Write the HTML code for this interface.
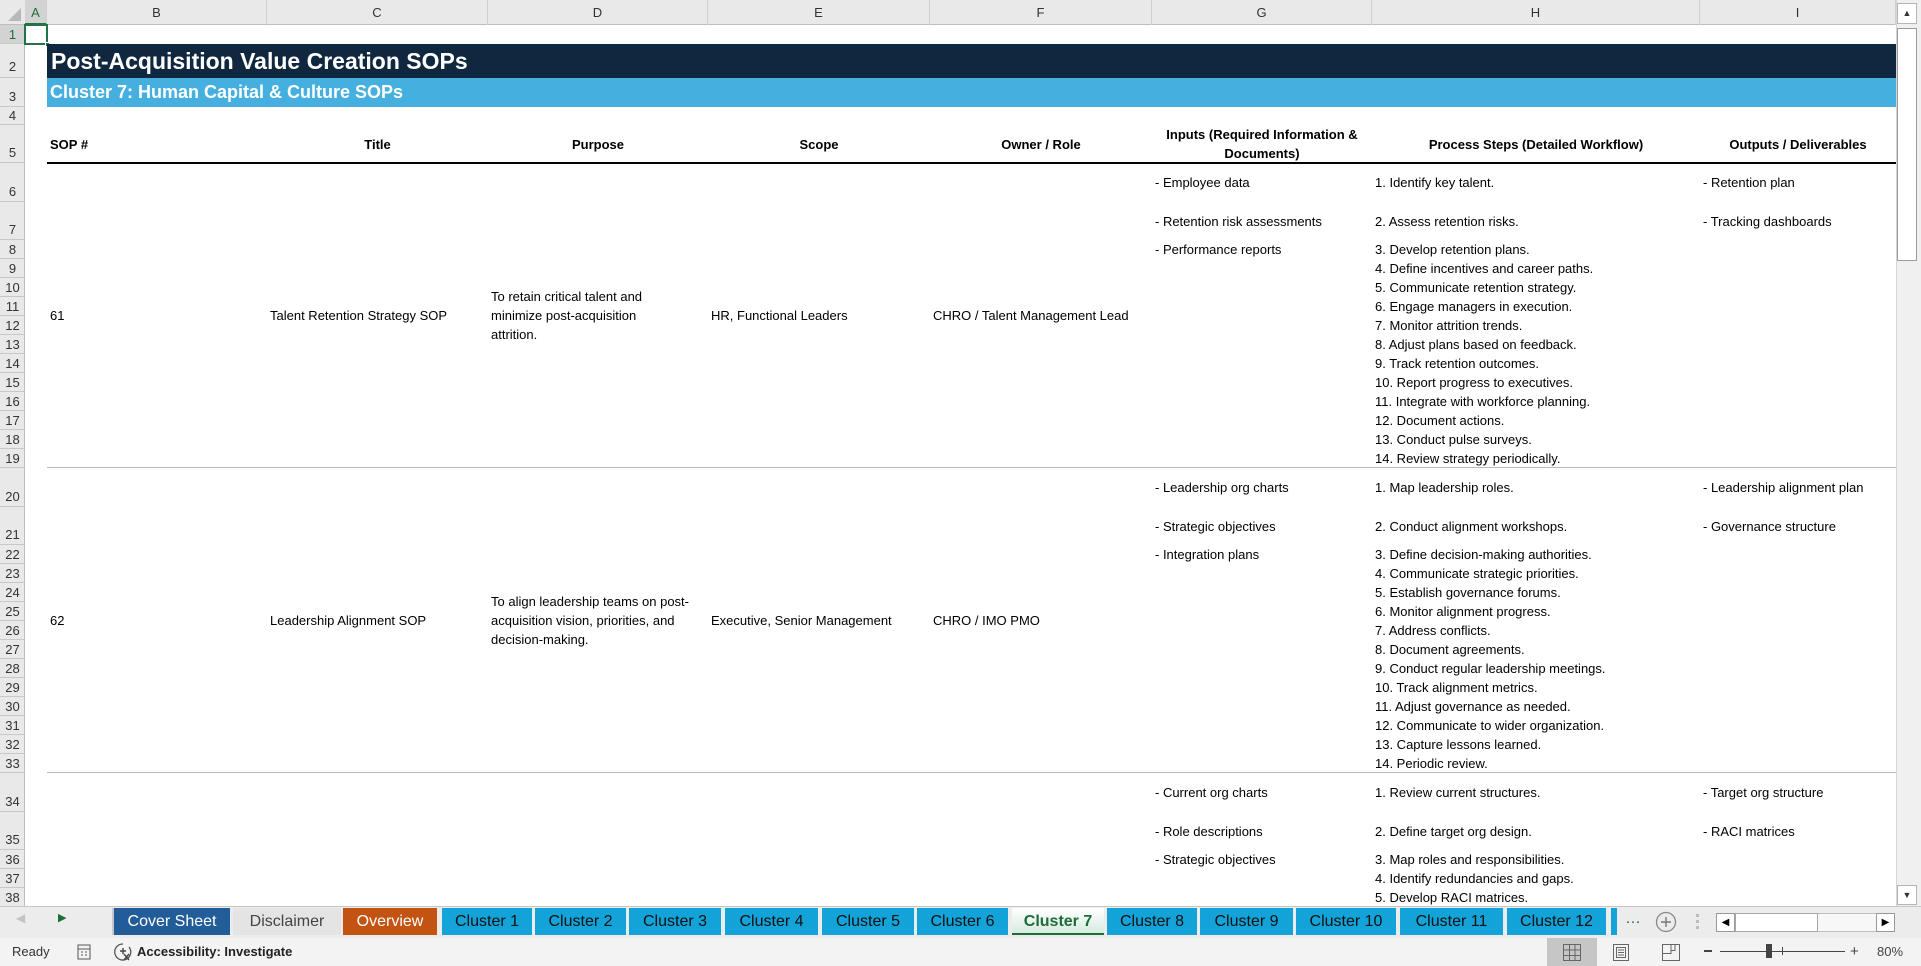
<!DOCTYPE html>
<html><head><meta charset="utf-8"><style>
*{margin:0;padding:0;box-sizing:border-box}
body{width:1921px;height:966px;overflow:hidden;background:#fff;font-family:"Liberation Sans",Arial,sans-serif;position:relative;color:#000}
.a{position:absolute}
.ch{position:absolute;top:0;height:25px;line-height:25px;text-align:center;font-size:13px;color:#333;border-right:1px solid #d0d0d0}
.rh{position:absolute;left:0;width:25px;text-align:center;font-size:13px;color:#333;border-bottom:1px solid #c8c8c8}
.t{position:absolute;font-size:13px;white-space:nowrap;display:flex;align-items:center}
.m{position:absolute;font-size:13px;display:flex;align-items:center;line-height:19px}
.tab{position:absolute;top:908px;height:27px;line-height:27px;text-align:center;font-size:16px;color:#111;background:#14a3d8}
</style></head><body>
<div class="a" style="left:0;top:0;width:1896px;height:25px;background:#e9e9e9;border-bottom:1px solid #bdbdbd"></div>
<svg class="a" style="left:8px;top:8px" width="14" height="14"><polygon points="13,0 13,13 0,13" fill="#b8b8b8"/></svg>
<div class="ch" style="left:25px;width:22px;background:#d3d3d3;color:#1e6b3a;border-bottom:2px solid #217346">A</div>
<div class="ch" style="left:47px;width:220px">B</div>
<div class="ch" style="left:267px;width:221px">C</div>
<div class="ch" style="left:488px;width:220px">D</div>
<div class="ch" style="left:708px;width:222px">E</div>
<div class="ch" style="left:930px;width:222px">F</div>
<div class="ch" style="left:1152px;width:220px">G</div>
<div class="ch" style="left:1372px;width:328px">H</div>
<div class="ch" style="left:1700px;width:196px">I</div>
<div class="a" style="left:0;top:25px;width:25px;height:882px;background:#e9e9e9;border-right:1px solid #bdbdbd"></div>
<div class="rh" style="top:25px;height:19px;line-height:19px;background:#d3d3d3;color:#1e6b3a">1</div>
<div class="rh" style="top:44px;height:34px;line-height:46px">2</div>
<div class="rh" style="top:78px;height:29px;line-height:38px">3</div>
<div class="rh" style="top:107px;height:18px;line-height:18px">4</div>
<div class="rh" style="top:125px;height:38px;line-height:56px">5</div>
<div class="rh" style="top:163px;height:39px;line-height:58px">6</div>
<div class="rh" style="top:202px;height:38px;line-height:56px">7</div>
<div class="rh" style="top:240px;height:19px;line-height:19px">8</div>
<div class="rh" style="top:259px;height:19px;line-height:19px">9</div>
<div class="rh" style="top:278px;height:19px;line-height:19px">10</div>
<div class="rh" style="top:297px;height:19px;line-height:19px">11</div>
<div class="rh" style="top:316px;height:19px;line-height:19px">12</div>
<div class="rh" style="top:335px;height:19px;line-height:19px">13</div>
<div class="rh" style="top:354px;height:19px;line-height:19px">14</div>
<div class="rh" style="top:373px;height:19px;line-height:19px">15</div>
<div class="rh" style="top:392px;height:19px;line-height:19px">16</div>
<div class="rh" style="top:411px;height:19px;line-height:19px">17</div>
<div class="rh" style="top:430px;height:19px;line-height:19px">18</div>
<div class="rh" style="top:449px;height:19px;line-height:19px">19</div>
<div class="rh" style="top:468px;height:39px;line-height:58px">20</div>
<div class="rh" style="top:507px;height:38px;line-height:56px">21</div>
<div class="rh" style="top:545px;height:19px;line-height:19px">22</div>
<div class="rh" style="top:564px;height:19px;line-height:19px">23</div>
<div class="rh" style="top:583px;height:19px;line-height:19px">24</div>
<div class="rh" style="top:602px;height:19px;line-height:19px">25</div>
<div class="rh" style="top:621px;height:19px;line-height:19px">26</div>
<div class="rh" style="top:640px;height:19px;line-height:19px">27</div>
<div class="rh" style="top:659px;height:19px;line-height:19px">28</div>
<div class="rh" style="top:678px;height:19px;line-height:19px">29</div>
<div class="rh" style="top:697px;height:19px;line-height:19px">30</div>
<div class="rh" style="top:716px;height:19px;line-height:19px">31</div>
<div class="rh" style="top:735px;height:19px;line-height:19px">32</div>
<div class="rh" style="top:754px;height:19px;line-height:19px">33</div>
<div class="rh" style="top:773px;height:39px;line-height:58px">34</div>
<div class="rh" style="top:812px;height:38px;line-height:56px">35</div>
<div class="rh" style="top:850px;height:19px;line-height:19px">36</div>
<div class="rh" style="top:869px;height:19px;line-height:19px">37</div>
<div class="rh" style="top:888px;height:19px;line-height:19px">38</div>
<div class="a" style="left:24px;top:24px;width:24px;height:21px;border:2px solid #217346"></div>
<div class="a" style="left:45px;top:42px;width:5px;height:5px;background:#217346;border:1px solid #fff"></div>
<div class="a" style="left:47px;top:44px;width:1849px;height:34px;background:#10283f;color:#fff;font-weight:bold;font-size:23px;line-height:34px;padding-left:4px">Post-Acquisition Value Creation SOPs</div>
<div class="a" style="left:47px;top:78px;width:1849px;height:29px;background:#45b0e0;color:#fff;font-weight:bold;font-size:18px;line-height:29px;padding-left:3px">Cluster 7: Human Capital &amp; Culture SOPs</div>
<div class="a" style="left:47px;top:162px;width:1849px;height:2px;background:#000"></div>
<div class="t" style="left:50px;top:125px;height:38px;font-weight:bold">SOP #</div>
<div class="t" style="left:267px;width:221px;top:125px;height:38px;font-weight:bold;justify-content:center">Title</div>
<div class="t" style="left:488px;width:220px;top:125px;height:38px;font-weight:bold;justify-content:center">Purpose</div>
<div class="t" style="left:708px;width:222px;top:125px;height:38px;font-weight:bold;justify-content:center">Scope</div>
<div class="t" style="left:930px;width:222px;top:125px;height:38px;font-weight:bold;justify-content:center">Owner / Role</div>
<div class="m" style="left:1152px;width:220px;top:125px;height:38px;font-weight:bold;justify-content:center;text-align:center">Inputs (Required Information &amp;<br>Documents)</div>
<div class="t" style="left:1372px;width:328px;top:125px;height:38px;font-weight:bold;justify-content:center">Process Steps (Detailed Workflow)</div>
<div class="t" style="left:1700px;width:196px;top:125px;height:38px;font-weight:bold;justify-content:center">Outputs / Deliverables</div>
<div class="a" style="left:47px;top:467px;width:1849px;height:1px;background:#bcbcbc"></div>
<div class="a" style="left:47px;top:772px;width:1849px;height:1px;background:#bcbcbc"></div>
<div class="t" style="left:50px;top:163px;height:305px">61</div>
<div class="t" style="left:270px;top:163px;height:305px">Talent Retention Strategy SOP</div>
<div class="m" style="left:491px;top:163px;height:305px">To retain critical talent and<br>minimize post-acquisition<br>attrition.</div>
<div class="t" style="left:711px;top:163px;height:305px">HR, Functional Leaders</div>
<div class="t" style="left:933px;top:163px;height:305px">CHRO / Talent Management Lead</div>
<div class="t" style="left:1155px;top:163px;height:39px">- Employee data</div>
<div class="t" style="left:1155px;top:202px;height:38px">- Retention risk assessments</div>
<div class="t" style="left:1155px;top:240px;height:19px">- Performance reports</div>
<div class="t" style="left:1703px;top:163px;height:39px">- Retention plan</div>
<div class="t" style="left:1703px;top:202px;height:38px">- Tracking dashboards</div>
<div class="t" style="left:1375px;top:163px;height:39px">1. Identify key talent.</div>
<div class="t" style="left:1375px;top:202px;height:38px">2. Assess retention risks.</div>
<div class="t" style="left:1375px;top:240px;height:19px">3. Develop retention plans.</div>
<div class="t" style="left:1375px;top:259px;height:19px">4. Define incentives and career paths.</div>
<div class="t" style="left:1375px;top:278px;height:19px">5. Communicate retention strategy.</div>
<div class="t" style="left:1375px;top:297px;height:19px">6. Engage managers in execution.</div>
<div class="t" style="left:1375px;top:316px;height:19px">7. Monitor attrition trends.</div>
<div class="t" style="left:1375px;top:335px;height:19px">8. Adjust plans based on feedback.</div>
<div class="t" style="left:1375px;top:354px;height:19px">9. Track retention outcomes.</div>
<div class="t" style="left:1375px;top:373px;height:19px">10. Report progress to executives.</div>
<div class="t" style="left:1375px;top:392px;height:19px">11. Integrate with workforce planning.</div>
<div class="t" style="left:1375px;top:411px;height:19px">12. Document actions.</div>
<div class="t" style="left:1375px;top:430px;height:19px">13. Conduct pulse surveys.</div>
<div class="t" style="left:1375px;top:449px;height:19px">14. Review strategy periodically.</div>
<div class="t" style="left:50px;top:468px;height:305px">62</div>
<div class="t" style="left:270px;top:468px;height:305px">Leadership Alignment SOP</div>
<div class="m" style="left:491px;top:468px;height:305px">To align leadership teams on post-<br>acquisition vision, priorities, and<br>decision-making.</div>
<div class="t" style="left:711px;top:468px;height:305px">Executive, Senior Management</div>
<div class="t" style="left:933px;top:468px;height:305px">CHRO / IMO PMO</div>
<div class="t" style="left:1155px;top:468px;height:39px">- Leadership org charts</div>
<div class="t" style="left:1155px;top:507px;height:38px">- Strategic objectives</div>
<div class="t" style="left:1155px;top:545px;height:19px">- Integration plans</div>
<div class="t" style="left:1703px;top:468px;height:39px">- Leadership alignment plan</div>
<div class="t" style="left:1703px;top:507px;height:38px">- Governance structure</div>
<div class="t" style="left:1375px;top:468px;height:39px">1. Map leadership roles.</div>
<div class="t" style="left:1375px;top:507px;height:38px">2. Conduct alignment workshops.</div>
<div class="t" style="left:1375px;top:545px;height:19px">3. Define decision-making authorities.</div>
<div class="t" style="left:1375px;top:564px;height:19px">4. Communicate strategic priorities.</div>
<div class="t" style="left:1375px;top:583px;height:19px">5. Establish governance forums.</div>
<div class="t" style="left:1375px;top:602px;height:19px">6. Monitor alignment progress.</div>
<div class="t" style="left:1375px;top:621px;height:19px">7. Address conflicts.</div>
<div class="t" style="left:1375px;top:640px;height:19px">8. Document agreements.</div>
<div class="t" style="left:1375px;top:659px;height:19px">9. Conduct regular leadership meetings.</div>
<div class="t" style="left:1375px;top:678px;height:19px">10. Track alignment metrics.</div>
<div class="t" style="left:1375px;top:697px;height:19px">11. Adjust governance as needed.</div>
<div class="t" style="left:1375px;top:716px;height:19px">12. Communicate to wider organization.</div>
<div class="t" style="left:1375px;top:735px;height:19px">13. Capture lessons learned.</div>
<div class="t" style="left:1375px;top:754px;height:19px">14. Periodic review.</div>
<div class="t" style="left:1155px;top:773px;height:39px">- Current org charts</div>
<div class="t" style="left:1155px;top:812px;height:38px">- Role descriptions</div>
<div class="t" style="left:1155px;top:850px;height:19px">- Strategic objectives</div>
<div class="t" style="left:1703px;top:773px;height:39px">- Target org structure</div>
<div class="t" style="left:1703px;top:812px;height:38px">- RACI matrices</div>
<div class="t" style="left:1375px;top:773px;height:39px">1. Review current structures.</div>
<div class="t" style="left:1375px;top:812px;height:38px">2. Define target org design.</div>
<div class="t" style="left:1375px;top:850px;height:19px">3. Map roles and responsibilities.</div>
<div class="t" style="left:1375px;top:869px;height:19px">4. Identify redundancies and gaps.</div>
<div class="t" style="left:1375px;top:888px;height:19px">5. Develop RACI matrices.</div>
<div class="a" style="left:1896px;top:0;width:25px;height:907px;background:#f0f0f0;border-left:1px solid #d6d6d6"></div>
<div class="a" style="left:1897px;top:3px;width:20px;height:21px;background:#fff;border:1px solid #b5b5b5;font-size:9px;text-align:center;line-height:19px;color:#333">▲</div>
<div class="a" style="left:1897px;top:28px;width:20px;height:233px;background:#fff;border:1px solid #9b9b9b"></div>
<div class="a" style="left:1897px;top:885px;width:20px;height:20px;background:#fff;border:1px solid #b5b5b5;font-size:9px;text-align:center;line-height:18px;color:#333">▼</div>
<div class="a" style="left:0;top:906px;width:1921px;height:1px;background:#c6c6c6"></div>
<div class="a" style="left:0;top:907px;width:1921px;height:31px;background:#ececec"></div>
<div class="a" style="left:16px;top:911px;font-size:12px;color:#c4c4c4">◀</div>
<div class="a" style="left:58px;top:911px;font-size:11px;color:#1e6b3a">▶</div>
<div class="a" style="left:112px;top:908px;width:2px;height:27px;background:#c8c8c8"></div>
<div class="tab" style="left:114px;width:116px;background:#225d9a;color:#fff">Cover Sheet</div>
<div class="tab" style="left:233px;width:108px;background:#e4e4e4;color:#444">Disclaimer</div>
<div class="tab" style="left:343px;width:94px;background:#c25312;color:#fff">Overview</div>
<div class="tab" style="left:442px;width:90px">Cluster 1</div>
<div class="tab" style="left:535px;width:91px">Cluster 2</div>
<div class="tab" style="left:629px;width:92px">Cluster 3</div>
<div class="tab" style="left:725px;width:93px">Cluster 4</div>
<div class="tab" style="left:822px;width:92px">Cluster 5</div>
<div class="tab" style="left:917px;width:91px">Cluster 6</div>
<div class="tab" style="left:1012px;width:92px;background:linear-gradient(#ffffff,#d6ebe0);color:#1e6b3a;font-weight:bold;border-bottom:2px solid #1e6b3a">Cluster 7</div>
<div class="tab" style="left:1107px;width:90px">Cluster 8</div>
<div class="tab" style="left:1200px;width:93px">Cluster 9</div>
<div class="tab" style="left:1296px;width:100px">Cluster 10</div>
<div class="tab" style="left:1400px;width:103px">Cluster 11</div>
<div class="tab" style="left:1507px;width:99px">Cluster 12</div>
<div class="tab" style="left:1611px;width:6px"></div>
<div class="a" style="left:1625px;top:910px;font-size:16px;color:#1e6b3a">…</div>
<svg class="a" style="left:1655px;top:911px" width="22" height="22"><circle cx="11" cy="11" r="9.5" fill="none" stroke="#888" stroke-width="1.3"/><path d="M11 6v10M6 11h10" stroke="#777" stroke-width="1.4"/></svg>
<div class="a" style="left:1696px;top:914px;width:3px;height:16px;background:repeating-linear-gradient(#bbb 0 3px,transparent 3px 6px)"></div>
<div class="a" style="left:1716px;top:913px;width:179px;height:19px;background:#f7f7f7;border:1px solid #c0c0c0"></div>
<div class="a" style="left:1716px;top:913px;width:19px;height:19px;background:#fff;border:1px solid #999;font-size:10px;line-height:17px;text-align:center">◀</div>
<div class="a" style="left:1735px;top:913px;width:83px;height:19px;background:#fff;border:1px solid #a8a8a8"></div>
<div class="a" style="left:1876px;top:913px;width:19px;height:19px;background:#fff;border:1px solid #999;font-size:10px;line-height:17px;text-align:center">▶</div>
<div class="a" style="left:0;top:938px;width:1921px;height:28px;background:#f3f3f3"></div>
<div class="a" style="left:12px;top:938px;height:28px;line-height:28px;font-size:13px;color:#333">Ready</div>
<svg class="a" style="left:77px;top:944px" width="14" height="16"><rect x="1" y="1" width="12" height="14" fill="none" stroke="#555"/><path d="M1 5h12M4 8h2M8 8h2M4 11h2M8 11h2" stroke="#555"/></svg>
<svg class="a" style="left:114px;top:942px" width="20" height="20"><path d="M9 2a8 8 0 1 0 6 3" fill="none" stroke="#555" stroke-width="1.3"/><path d="M9 6v6M6 9h6M10 12l5 6M15 12l-5 6" stroke="#444" stroke-width="1.4"/></svg>
<div class="a" style="left:137px;top:938px;height:28px;line-height:28px;font-size:13px;font-weight:bold;color:#222">Accessibility: Investigate</div>
<div class="a" style="left:1547px;top:938px;width:50px;height:28px;background:#c6c6c6"></div>
<svg class="a" style="left:1563px;top:944px" width="18" height="17"><rect x="0.5" y="0.5" width="17" height="16" fill="none" stroke="#666"/><path d="M6.5 0v17M12 0v17M0 6h18M0 11.5h18" stroke="#666"/></svg>
<svg class="a" style="left:1613px;top:944px" width="16" height="17"><rect x="0.5" y="0.5" width="15" height="16" fill="none" stroke="#666"/><rect x="3.5" y="3.5" width="9" height="10" fill="none" stroke="#666"/><path d="M5 6h6M5 8.5h6M5 11h6" stroke="#666"/></svg>
<svg class="a" style="left:1662px;top:944px" width="18" height="17"><path d="M0.5 0.5h17v16h-17z M0.5 9.5h8.5v-9 M9 9.5V0.5 M13 0.5v6h-4" fill="none" stroke="#666"/></svg>
<div class="a" style="left:1704px;top:950px;width:8px;height:1.5px;background:#444"></div>
<div class="a" style="left:1720px;top:951px;width:125px;height:1px;background:#444"></div>
<div class="a" style="left:1766px;top:944px;width:6px;height:14px;background:#444"></div>
<div class="a" style="left:1782px;top:947px;width:1px;height:8px;background:#444"></div>
<div class="a" style="left:1850px;top:938px;height:28px;line-height:27px;font-size:15px;color:#444">+</div>
<div class="a" style="left:1877px;top:938px;height:28px;line-height:28px;font-size:13px;color:#444">80%</div>
</body></html>
